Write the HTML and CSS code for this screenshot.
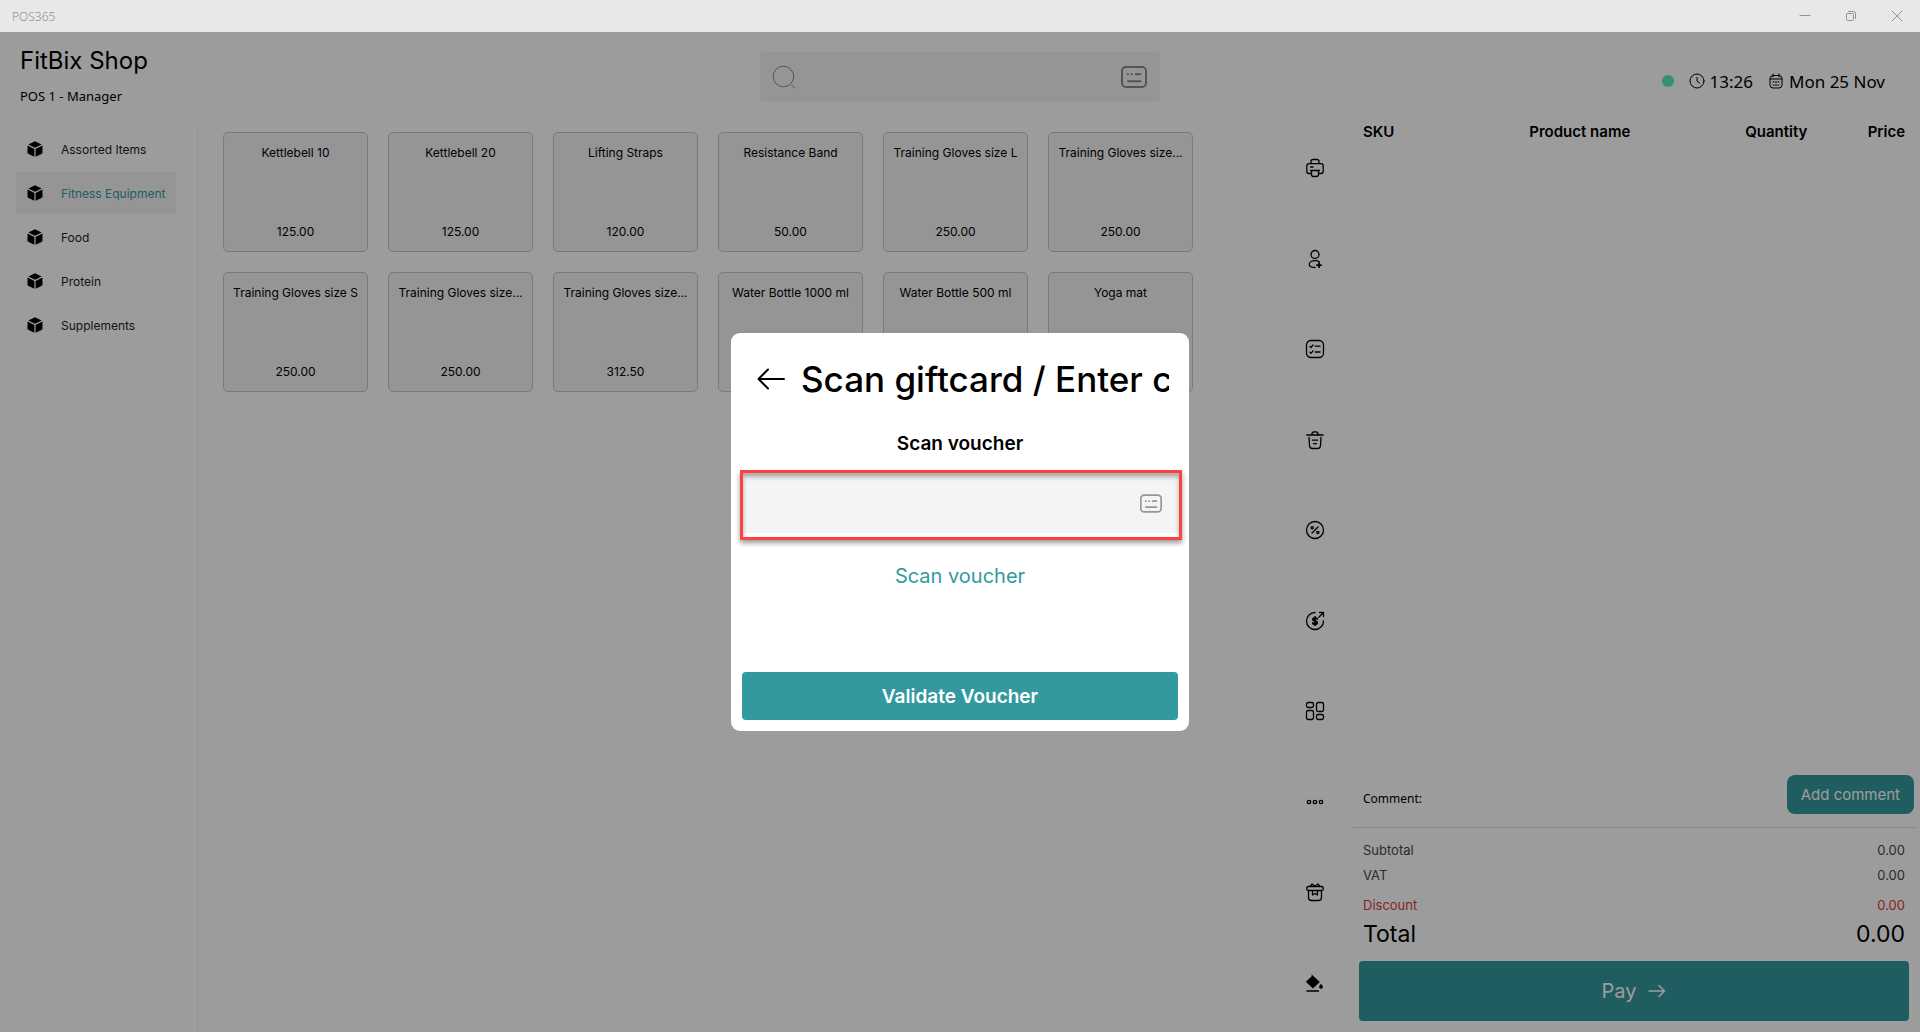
FILE: index.html
```
<!DOCTYPE html>
<html lang="en">
  <head>
    <meta charset="UTF-8" />
    <meta name="viewport" content="width=device-width, initial-scale=1.0" />
    <title>POS365</title>
    <link rel="stylesheet" href="styles.css">
  </head>
  <body>
    <svg class="sprite" aria-hidden="true">
      <symbol id="icon-cube" viewBox="0 0 16 16">
        <path d="M8 0.2 14.6 3.4 8 6.8 1.4 3.4z" />
        <path d="M0.6 4.6 7.4 8.1V15.8L1.6 13Q0.5 12.4 0.5 11.2z" />
        <path d="M15.4 4.6 8.6 8.1V15.8L14.4 13Q15.5 12.4 15.5 11.2z" />
      </symbol>
      <symbol id="icon-keyboard" viewBox="0 0 26 22">
        <rect x="1" y="1" width="24" height="20" rx="4" />
        <path d="M6.700 8.300h0.300M10.500 8.300h0.300M15 8.300h4.500M7 15.300h12.500" />
      </symbol>
    </svg>

    <div class="titlebar">
      <span class="titlebar-name">POS365</span>
      <div class="window-buttons">
        <button type="button" aria-label="Minimize">
          <svg viewBox="0 0 12 12"><path d="M1 5.500h10" /></svg>
        </button>
        <button type="button" aria-label="Restore">
          <svg viewBox="0 0 12 12"><rect x="1.500" y="3.500" width="7" height="7" rx="1" /><path d="M3.500 1.500H8.500Q10.500 1.500 10.500 3.500V8.500" /></svg>
        </button>
        <button type="button" aria-label="Close">
          <svg viewBox="0 0 12 12"><path d="M1 1l10 10M11 1L1 11" /></svg>
        </button>
      </div>
    </div>

    <div class="app">
      <header class="header">
        <div class="shop">
          <h1 class="shop-name">FitBix Shop</h1>
          <p class="shop-user">POS 1 - Manager</p>
        </div>
        <div class="search">
          <svg class="search-icon" viewBox="0 0 24 24"><circle cx="11.500" cy="11.500" r="10.300" /><path d="M19.800 20.200l3 3" /></svg>
          <input type="text" class="search-input" aria-label="Search products" />
          <button type="button" class="keyboard-btn" aria-label="Show keyboard">
            <svg class="keyboard-icon"><use href="#icon-keyboard" /></svg>
          </button>
        </div>
        <div class="status">
          <span class="status-dot"></span>
          <span class="status-item">
            <svg viewBox="0 0 16 16"><circle cx="8" cy="8" r="7" /><path d="M8 4.500V8.200L10.600 10" /></svg>
            13:26
          </span>
          <span class="status-item">
            <svg viewBox="0 0 16 16"><rect x="2" y="2.500" width="12" height="12.500" rx="3" /><path d="M5 1v3M11 1v3M2 6h12" /><path d="M5 9h1.200M7.400 9h1.200M9.800 9H11M5 12h1.200M7.400 12h1.200M9.800 12H11" /></svg>
            Mon 25 Nov
          </span>
        </div>
      </header>

      <nav class="sidebar">
        <a href="#" class="category"><svg><use href="#icon-cube" /></svg>Assorted Items</a>
        <a href="#" class="category active"><svg><use href="#icon-cube" /></svg>Fitness Equipment</a>
        <a href="#" class="category"><svg><use href="#icon-cube" /></svg>Food</a>
        <a href="#" class="category"><svg><use href="#icon-cube" /></svg>Protein</a>
        <a href="#" class="category"><svg><use href="#icon-cube" /></svg>Supplements</a>
      </nav>

      <main class="products">
        <button type="button" class="product"><span class="product-name">Kettlebell 10</span><span>125.00</span></button>
        <button type="button" class="product"><span class="product-name">Kettlebell 20</span><span>125.00</span></button>
        <button type="button" class="product"><span class="product-name">Lifting Straps</span><span>120.00</span></button>
        <button type="button" class="product"><span class="product-name">Resistance Band</span><span>50.00</span></button>
        <button type="button" class="product"><span class="product-name">Training Gloves size L</span><span>250.00</span></button>
        <button type="button" class="product"><span class="product-name">Training Gloves size...</span><span>250.00</span></button>
        <button type="button" class="product"><span class="product-name">Training Gloves size S</span><span>250.00</span></button>
        <button type="button" class="product"><span class="product-name">Training Gloves size...</span><span>250.00</span></button>
        <button type="button" class="product"><span class="product-name">Training Gloves size...</span><span>312.50</span></button>
        <button type="button" class="product"><span class="product-name">Water Bottle 1000 ml</span></button>
        <button type="button" class="product"><span class="product-name">Water Bottle 500 ml</span></button>
        <button type="button" class="product"><span class="product-name">Yoga mat</span></button>
      </main>

      <div class="tools">
        <button type="button" aria-label="Print">
          <svg viewBox="0 0 20 20"><path d="M6 5.500V3.500Q6 1.500 8 1.500H12Q14 1.500 14 3.500V5.500" /><path d="M6 15.500H4Q1.800 15.500 1.800 13.300V8Q1.800 5.700 4 5.700H16Q18.200 5.700 18.200 8V13.300Q18.200 15.500 16 15.500H14" /><path d="M5.500 12.500H14.500M6.500 12.500V16.500Q6.500 18.500 8.500 18.500H11.500Q13.500 18.500 13.500 16.500V12.500M5.500 9H8" /></svg>
        </button>
        <button type="button" aria-label="Add customer">
          <svg viewBox="0 0 20 20"><circle cx="10" cy="5.500" r="4" /><path d="M14.500 13Q12.800 11.700 10 11.700C6.500 11.700 4.200 13.300 4.200 15.300C4.200 17.300 6.500 18.500 10 18.500" /><path class="bold" d="M14 14.200V18.200M12 16.200H16" /></svg>
        </button>
        <button type="button" aria-label="Orders">
          <svg viewBox="0 0 20 20"><rect x="1.500" y="1.500" width="17" height="17" rx="4.500" /><path d="M10.300 7.200H15M10.300 13H15M5 7.500L6 8.500 8 6M5 13.300L6 14.300 8 11.800" /></svg>
        </button>
        <button type="button" aria-label="Delete">
          <svg viewBox="0 0 20 20"><path d="M1.800 5H18.200M6.800 5Q6.800 1.800 9 1.800H11Q13.200 1.800 13.200 5M4 7.500L4.500 15.500Q4.700 18.500 7.300 18.500H12.700Q15.300 18.500 15.500 15.500L16 7.500M7.500 10.200H12.500M8.500 13.700H11.500" /></svg>
        </button>
        <button type="button" aria-label="Discount">
          <svg viewBox="0 0 20 20"><circle cx="10" cy="10" r="8.500" /><path d="M7 13L13 7" /><circle cx="7.200" cy="7.700" r="1.100" /><circle cx="12.800" cy="12.500" r="1.100" /></svg>
        </button>
        <button type="button" aria-label="Refund">
          <svg viewBox="0 0 20 20"><path d="M10 1.500A8.500 8.500 0 1 0 18.500 10M13.800 6.200L18.500 1.500M14.500 1.500H18.500V5.500" /><path class="bold" d="M12.200 8Q12 6.800 10 6.800T7.800 8.300Q7.800 9.600 10 10T12.200 11.700Q12.200 13.200 10 13.200T7.800 12M10 5.800V14.200" /></svg>
        </button>
        <button type="button" aria-label="Dashboard">
          <svg viewBox="0 0 20 20"><rect x="1.500" y="1.500" width="7" height="5" rx="1.800" /><rect x="11.500" y="1.500" width="7" height="9" rx="1.800" /><rect x="1.500" y="9.500" width="7" height="9" rx="1.800" /><rect x="11.500" y="13.500" width="7" height="5" rx="1.800" /></svg>
        </button>
        <button type="button" aria-label="More">
          <svg viewBox="0 0 20 20"><circle cx="4" cy="10" r="1.700" /><circle cx="10" cy="10" r="1.700" /><circle cx="16" cy="10" r="1.700" /></svg>
        </button>
        <button type="button" aria-label="Gift card">
          <svg viewBox="0 0 20 20"><rect x="1.800" y="4.500" width="16.400" height="4" rx="1.500" /><path d="M3.500 8.500V15.500Q3.500 18.500 6.500 18.500H13.500Q16.500 18.500 16.500 15.500V8.500M5.200 4.300L7 2 10 4.200 13 2 14.800 4.300M7.500 8.700V13L10 11.500 12.500 13V8.700" /></svg>
        </button>
        <button type="button" aria-label="Theme">
          <svg viewBox="0 0 20 20"><path class="solid" d="M6.500 1.200L7.800 2.400 14.800 9 7.900 15.500 0.800 8.800 6.800 3.200z" /><path class="solid" d="M16 10.800Q18.400 13.200 17.800 14.800 16 16.600 14.200 14.800 13.600 13.200 16 10.800z" /><path d="M2 18H13.500" /></svg>
        </button>
      </div>

      <section class="order">
        <table class="order-table">
          <thead>
            <tr>
              <th class="col-sku">SKU</th>
              <th class="col-name">Product name</th>
              <th class="col-qty">Quantity</th>
              <th class="col-price">Price</th>
            </tr>
          </thead>
        </table>
        <div class="comment">
          <span>Comment:</span>
          <button type="button" class="comment-btn">Add comment</button>
        </div>
        <dl class="totals">
          <div class="totals-row"><dt>Subtotal</dt><dd>0.00</dd></div>
          <div class="totals-row"><dt>VAT</dt><dd>0.00</dd></div>
          <div class="totals-row discount"><dt>Discount</dt><dd>0.00</dd></div>
          <div class="totals-row total"><dt>Total</dt><dd>0.00</dd></div>
        </dl>
        <button type="button" class="pay-btn">
          Pay
          <svg viewBox="0 0 18 14"><path d="M1 7H16.500M11 1.500L16.500 7 11 12.500" /></svg>
        </button>
      </section>

      <div class="backdrop">
        <div class="modal" role="dialog" aria-modal="true" aria-labelledby="modal-title">
          <div class="modal-header">
            <button type="button" class="back-btn" aria-label="Back">
              <svg viewBox="0 0 28 22"><path d="M27 11H1.500M11 1.500L1.500 11 11 20.500" /></svg>
            </button>
            <h2 class="modal-title" id="modal-title">Scan giftcard / Enter code</h2>
          </div>
          <label class="modal-label" for="voucher">Scan voucher</label>
          <div class="voucher-field">
            <input type="text" id="voucher" class="voucher-input" />
            <button type="button" class="keyboard-btn" aria-label="Show keyboard">
              <svg class="keyboard-icon small"><use href="#icon-keyboard" /></svg>
            </button>
          </div>
          <a href="#" class="scan-link">Scan voucher</a>
          <button type="button" class="validate-btn">Validate Voucher</button>
        </div>
      </div>
    </div>
  </body>
</html>
```
FILE: styles.css
```
* {
  margin: 0;
  padding: 0;
  box-sizing: border-box;
}

body {
  font-family: Inter, "Liberation Sans", sans-serif;
  background: #ffffff;
  color: #000000;
  height: 100vh;
  display: flex;
  flex-direction: column;
  overflow: hidden;
}

button,
input {
  font: inherit;
  color: inherit;
  border: none;
  background: none;
  outline: none;
}

button {
  cursor: pointer;
}

a {
  text-decoration: none;
}

svg {
  display: block;
  flex: none;
  fill: none;
  stroke: currentColor;
  stroke-linecap: round;
  stroke-linejoin: round;
}

.sprite {
  display: none;
}

/* Title bar */
.titlebar {
  display: flex;
  justify-content: space-between;
  align-items: center;
  height: 32px;
  flex: none;
  padding-left: 12px;
  background: #e8e8e8;
  color: #929292;
}

.titlebar-name {
  font-family: "Noto Sans", sans-serif;
  font-size: 12px;
  font-weight: 300;
}

.window-buttons {
  display: flex;
}

.window-buttons button {
  width: 46px;
  height: 32px;
  display: flex;
  justify-content: center;
  align-items: center;
}

.window-buttons svg {
  width: 12px;
  height: 12px;
}

/* App layout */
.app {
  position: relative;
  flex: 1;
  min-height: 0;
  display: grid;
  grid-template-columns: 198px 1fr 76px 567px;
  grid-template-rows: 90px 1fr;
}

.header {
  grid-column: 1 / -1;
  display: grid;
  grid-template-columns: 1fr 400px 1fr;
  align-items: start;
}

.shop {
  padding: 13px 20px 0;
}

.shop-name {
  font-size: 24px;
  font-weight: 400;
  line-height: 32px;
}

.shop-user {
  font-family: "Noto Sans", sans-serif;
  font-size: 13px;
  line-height: 20px;
  margin-top: 9px;
}

.search {
  display: flex;
  align-items: center;
  height: 50px;
  margin-top: 20px;
  padding: 0 13px 0 12px;
  border-radius: 4px;
  background: #f4f4f4;
  color: #8c8c8c;
}

.search-icon {
  width: 24px;
  height: 24px;
}

.search-input {
  flex: 1;
  min-width: 0;
  height: 100%;
  padding: 0 12px;
}

.keyboard-icon {
  width: 26px;
  height: 22px;
  stroke-width: 2;
}

.keyboard-icon.small {
  width: 22px;
  height: 19px;
}

.status {
  display: flex;
  justify-content: flex-end;
  align-items: center;
  height: 28px;
  margin-top: 35px;
  padding-right: 35px;
  gap: 15px;
  font-family: "Noto Sans", sans-serif;
  font-size: 17px;
}

.status-dot {
  width: 12px;
  height: 12px;
  border-radius: 50%;
  background: #58eac6;
}

.status-item {
  display: flex;
  align-items: center;
  gap: 5px;
}

.status-item svg {
  width: 16px;
  height: 16px;
}

/* Categories */
.sidebar {
  display: flex;
  flex-direction: column;
  gap: 2px;
  padding: 6px 21px 0 16px;
  border-right: 1px solid #f4f4f4;
}

.category {
  display: flex;
  align-items: center;
  gap: 18px;
  height: 42px;
  padding-left: 11px;
  font-size: 12px;
  color: #1e1e1e;
}

.category svg {
  width: 16px;
  height: 16px;
  margin-right: 0;
  fill: #000000;
  stroke: none;
}

.category.active {
  background: #f4f4f4;
  color: #33999f;
}

/* Products */
.products {
  display: grid;
  grid-template-columns: repeat(auto-fill, 145px);
  grid-auto-rows: 120px;
  gap: 20px;
  padding: 10px 0 0 25px;
}

.product {
  display: flex;
  flex-direction: column;
  justify-content: space-between;
  align-items: center;
  padding: 12px 8px 11px;
  border: 1px solid #c8c8c8;
  border-radius: 5px;
  background: #f4f4f4;
  font-size: 12px;
  line-height: 16px;
  white-space: nowrap;
}

.tools {
  display: grid;
  grid-auto-rows: 1fr;
  padding: 1px 0 4px;
}

.tools button {
  display: flex;
  justify-content: center;
  align-items: center;
}

.tools svg {
  width: 20px;
  height: 20px;
  stroke-width: 1.3;
}

.tools .solid {
  fill: currentColor;
  stroke: none;
}

.tools .bold {
  stroke-width: 1.8;
}

/* Order panel */
.order {
  display: flex;
  flex-direction: column;
  padding: 1px 5px 11px 0;
}

.order-table {
  table-layout: fixed;
  border-collapse: collapse;
  margin: 0 10px;
  font-size: 15px;
  line-height: 18px;
}

.order-table th {
  font-weight: 600;
}

.order-table .col-sku {
  width: 20%;
  text-align: left;
}

.order-table .col-name {
  width: 40%;
}

.order-table .col-qty {
  width: 22%;
  text-align: right;
}

.order-table .col-price {
  width: 18%;
  text-align: right;
}

.comment {
  display: flex;
  justify-content: space-between;
  align-items: flex-start;
  margin-top: auto;
  padding: 0 1px 13px 10px;
  border-bottom: 1px solid #d8d8d8;
  font-family: "Noto Sans", sans-serif;
  font-size: 12px;
}

.comment span {
  line-height: 20px;
  margin-top: 14px;
}

.comment-btn {
  height: 39px;
  padding: 0 14px;
  border-radius: 8px;
  background: #33999f;
  color: #ffffff;
  font-family: Inter, sans-serif;
  font-size: 15px;
}

.totals {
  padding: 10px 10px 11px;
  font-size: 13px;
  color: #484848;
}

.totals-row {
  display: flex;
  justify-content: space-between;
  line-height: 25px;
}

.totals-row.discount {
  margin-top: 5px;
  color: #e03a3a;
}

.totals-row.total {
  font-size: 23px;
  line-height: 32px;
  color: #000000;
}

.pay-btn {
  display: flex;
  justify-content: center;
  align-items: center;
  gap: 12px;
  height: 60px;
  margin: 0 6px;
  border-radius: 4px;
  background: #33999f;
  color: #ffffff;
  font-size: 20px;
}

.pay-btn svg {
  width: 18px;
  height: 14px;
  stroke-width: 1.5;
}

/* Voucher modal */
.backdrop {
  position: absolute;
  inset: 0;
  display: flex;
  justify-content: center;
  align-items: center;
  background: rgba(0, 0, 0, 0.39);
}

.modal {
  display: flex;
  flex-direction: column;
  width: 458px;
  padding: 20px 9px 11px;
  border-radius: 9px;
  background: #ffffff;
}

.modal-header {
  display: flex;
  align-items: center;
  gap: 16px;
  padding: 0 11px 0 17px;
}

.back-btn svg {
  width: 28px;
  height: 22px;
  stroke-width: 2;
}

.modal-title {
  flex: 1;
  font-size: 35px;
  font-weight: 500;
  line-height: 52px;
  white-space: nowrap;
  overflow: hidden;
}

.modal-label {
  margin-top: 26px;
  font-size: 19px;
  font-weight: 600;
  line-height: 26px;
  text-align: center;
}

.voucher-field {
  display: flex;
  align-items: center;
  margin: 13px -2px 0 0;
  padding: 0 17px 4px 0;
  border: 3px solid #fc4343;
  background: linear-gradient(#f4f4f4 60px, #ffffff 60px);
  box-shadow: 0 3px 5px rgba(0, 0, 0, 0.4), inset 0 4px 4px rgba(0, 0, 0, 0.3);
}

.voucher-input {
  flex: 1;
  min-width: 0;
  height: 60px;
  padding: 0 16px;
  font-size: 19px;
}

.voucher-field .keyboard-btn {
  color: #969696;
}

.scan-link {
  align-self: center;
  margin-top: 23px;
  font-size: 20px;
  line-height: 26px;
  color: #33999f;
}

.validate-btn {
  height: 48px;
  margin: 83px 2px 0;
  border-radius: 4px;
  background: #33999f;
  color: #ffffff;
  font-size: 19px;
  font-weight: 600;
}
```
